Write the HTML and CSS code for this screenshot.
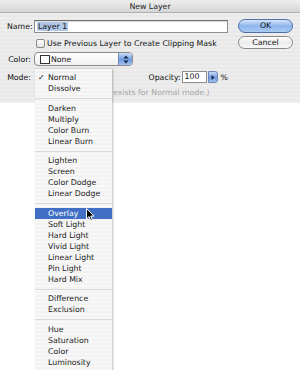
FILE: index.html
```html
<!DOCTYPE html>
<html lang="en">
<head>
  <meta charset="UTF-8">
  <title>New Layer</title>
  <link rel="stylesheet" href="styles.css">
</head>
<body>
  <div class="window">
    <div class="titlebar">New Layer</div>

    <div class="dialog">
      <div class="form">
        <div class="row row-name">
          <span class="label">Name:</span>
          <div class="textfield"><span class="selected">Layer 1</span></div>
        </div>
        <div class="row row-check">
          <span class="checkbox"></span>
          <span>Use Previous Layer to Create Clipping Mask</span>
        </div>
        <div class="row row-color">
          <span class="label">Color:</span>
          <div class="popup">
            <span class="swatch"></span>
            <span class="popup-text">None</span>
            <span class="popup-arrows">
              <svg width="6" height="9" viewBox="0 0 6 9"><path d="M3 0.5L5.5 3.5H0.5Z M3 8.5L5.5 5.5H0.5Z" fill="#1a2a48"/></svg>
            </span>
          </div>
        </div>
        <div class="row row-mode">
          <span class="label">Mode:</span>
          <div class="spacer"></div>
          <span class="opacity-label">Opacity:</span>
          <div class="numfield">100</div>
          <span class="stepper">
            <svg width="4" height="5" viewBox="0 0 4 5"><path d="M0.5 0L3.5 2.5L0.5 5Z" fill="#1a2a48"/></svg>
          </span>
          <span class="percent">%</span>
        </div>
        <div class="note">exists for Normal mode.)</div>
      </div>

      <div class="buttons">
        <div class="btn btn-default">OK</div>
        <div class="btn">Cancel</div>
      </div>
    </div>

    <!-- open blend mode menu -->
    <div class="menu">
      <div class="item checked"><span class="check">✓</span>Normal</div>
      <div class="item">Dissolve</div>
      <div class="sep"></div>
      <div class="item">Darken</div>
      <div class="item">Multiply</div>
      <div class="item">Color Burn</div>
      <div class="item">Linear Burn</div>
      <div class="sep"></div>
      <div class="item">Lighten</div>
      <div class="item">Screen</div>
      <div class="item">Color Dodge</div>
      <div class="item">Linear Dodge</div>
      <div class="sep"></div>
      <div class="item active">Overlay</div>
      <div class="item">Soft Light</div>
      <div class="item">Hard Light</div>
      <div class="item">Vivid Light</div>
      <div class="item">Linear Light</div>
      <div class="item">Pin Light</div>
      <div class="item">Hard Mix</div>
      <div class="sep"></div>
      <div class="item">Difference</div>
      <div class="item">Exclusion</div>
      <div class="sep"></div>
      <div class="item">Hue</div>
      <div class="item">Saturation</div>
      <div class="item">Color</div>
      <div class="item">Luminosity</div>
    </div>

    <svg class="cursor" width="9" height="14" viewBox="0 0 9 14">
      <path d="M0.5 0.5L0.5 11L3 8.6L4.8 12.8L6.4 12.1L4.7 8.1L8 8.1Z" fill="#000" stroke="#fff" stroke-width="1"/>
    </svg>
  </div>
</body>
</html>
```

FILE: styles.css
```css
body {
  margin: 0;
  padding: 0;
  background: #fff;
  font-family: 'DejaVu Sans', 'Liberation Sans', sans-serif;
  font-size: 7.8px;
  color: #111;
  overflow: hidden;
}

.window {
  position: relative;
  width: 300px;
  height: 370px;
}

.titlebar {
  height: 13px;
  line-height: 13px;
  text-align: center;
  background: linear-gradient(#eeeeee, #d6d6d6);
  border-bottom: 1px solid #b0b0b0;
  box-sizing: border-box;
  color: #222;
}

.dialog {
  display: flex;
  height: 90px;
  box-sizing: border-box;
  padding: 6px 7px 0 7px;
  background: repeating-linear-gradient(#ededed 0, #ededed 2px, #e8e8e8 2px, #e8e8e8 4px);
}

.form {
  width: 221px;
}

.row {
  display: flex;
  align-items: center;
}

.label {
  width: 27px;
  padding-right: 3px;
  box-sizing: border-box;
  text-align: right;
}

/* name */
.row-name {
  height: 14px;
}

.textfield {
  flex: 1;
  height: 13px;
  margin-top: 1px;
  box-sizing: border-box;
  background: #fff;
  border: 1px solid #8e8e8e;
  border-top-color: #6e6e6e;
  box-shadow: inset 0 1px 1px rgba(0, 0, 0, 0.15);
  padding-left: 2px;
  line-height: 11px;
}

.selected {
  background: #b3c8e8;
  padding: 0 1px;
}

/* checkbox */
.row-check {
  height: 12px;
  margin-top: 4px;
  padding-left: 29px;
}

.checkbox {
  width: 9px;
  height: 9px;
  box-sizing: border-box;
  border: 1px solid #8a8a8a;
  border-radius: 2px;
  background: linear-gradient(#fdfdfd, #e2e2e2);
  margin-right: 2px;
}

/* color popup */
.row-color {
  height: 14px;
  margin-top: 3px;
}

.popup {
  display: flex;
  align-items: center;
  width: 99px;
  height: 14px;
  box-sizing: border-box;
  border: 1px solid #8c8c8c;
  border-radius: 4px;
  background: linear-gradient(#ffffff, #f0f0f0);
  overflow: hidden;
}

.swatch {
  width: 10px;
  height: 9px;
  box-sizing: border-box;
  border: 1px solid #333;
  background: #fff;
  margin-left: 5px;
  margin-right: 1px;
}

.popup-text {
  flex: 1;
}

.popup-arrows {
  display: flex;
  align-items: center;
  justify-content: center;
  width: 13px;
  height: 100%;
  background: linear-gradient(#c9dcf6, #6e9be0 55%, #9fc2f0);
  border-left: 1px solid #6c87b4;
}

/* mode + opacity */
.row-mode {
  height: 14px;
  margin-top: 4px;
}

.spacer {
  flex: 1;
}

.opacity-label {
  margin-right: 1px;
}

.numfield {
  width: 25px;
  height: 12px;
  box-sizing: border-box;
  background: #fff;
  border: 1px solid #8e8e8e;
  padding-left: 2px;
  line-height: 10px;
}

.stepper {
  display: flex;
  align-items: center;
  justify-content: center;
  width: 10px;
  height: 12px;
  margin-left: 1px;
  box-sizing: border-box;
  border: 1px solid #6c87b4;
  border-radius: 0 3px 3px 0;
  background: linear-gradient(#c9dcf6, #6e9be0 55%, #9fc2f0);
}

.percent {
  margin-left: 3px;
}

.note {
  margin-top: 4px;
  height: 10px;
  line-height: 10px;
  padding-left: 106px;
  color: #a4a4a4;
  white-space: nowrap;
}

/* buttons */
.buttons {
  display: flex;
  flex-direction: column;
  gap: 3px;
  width: 55px;
  margin-left: 10px;
}

.btn {
  height: 14px;
  line-height: 12px;
  box-sizing: border-box;
  text-align: center;
  border: 1px solid #8a8a8a;
  border-radius: 7px;
  background: linear-gradient(#ffffff, #ececec 50%, #f8f8f8);
}

.btn-default {
  border-color: #4f6fa6;
  background: linear-gradient(#d6e6fa, #8db5ec 50%, #a9cbf4);
}

.btn + .btn {
  height: 13px;
}

/* menu over the dialog */
.menu {
  position: absolute;
  left: 35px;
  top: 68px;
  width: 77px;
  height: 310px;
  box-sizing: border-box;
  padding-top: 3px;
  background: repeating-linear-gradient(rgba(248, 248, 248, 0.95) 0, rgba(248, 248, 248, 0.95) 2px, rgba(242, 242, 242, 0.95) 2px, rgba(242, 242, 242, 0.95) 4px);
  box-shadow: 1px 1px 2px rgba(0, 0, 0, 0.25);
  border-top: 1px solid #d8d8d8;
}

.item {
  position: relative;
  height: 11px;
  line-height: 11px;
  padding-left: 13px;
  color: #1a1a1a;
  white-space: nowrap;
}

.check {
  position: absolute;
  left: 3px;
}

.item.active {
  background: #416fc4;
  color: #fff;
}

.sep {
  height: 8.5px;
  position: relative;
}

.sep::after {
  content: '';
  position: absolute;
  left: 0;
  right: 0;
  top: 4px;
  height: 1px;
  background: #d9d9d9;
}

.cursor {
  position: absolute;
  left: 86px;
  top: 208px;
}
```
